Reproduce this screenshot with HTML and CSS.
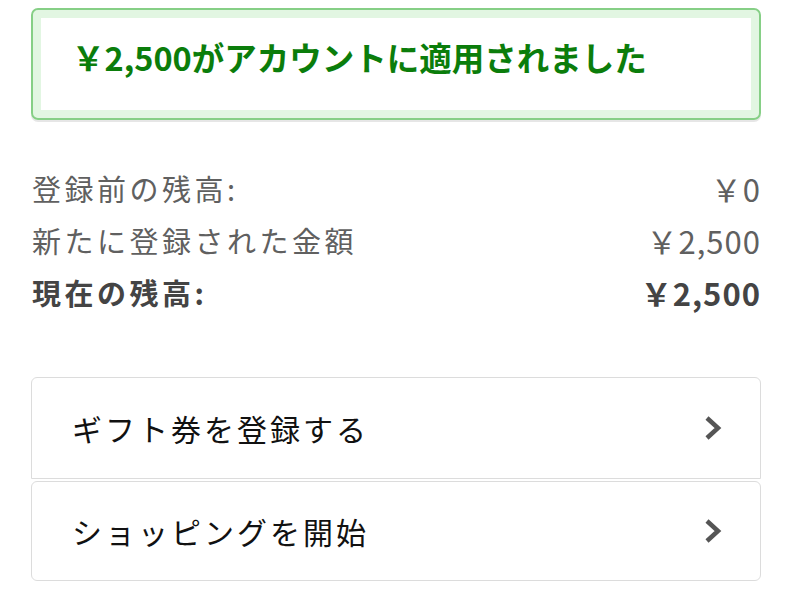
FILE: index.html
```html
<!DOCTYPE html>
<html lang="ja">
<head>
<meta charset="utf-8">
<title>ギフト券の登録</title>
<link rel="stylesheet" href="styles.css">
</head>
<body>
<main class="page">
  <div class="alert">
    <h4 class="alert-heading">￥2,500がアカウントに適用されました</h4>
  </div>

  <div class="balances">
    <div class="balance-row">
      <span class="balance-label">登録前の残高:</span>
      <span class="balance-amount">￥0</span>
    </div>
    <div class="balance-row">
      <span class="balance-label">新たに登録された金額</span>
      <span class="balance-amount">￥2,500</span>
    </div>
    <div class="balance-row balance-total">
      <span class="balance-label">現在の残高:</span>
      <span class="balance-amount">￥2,500</span>
    </div>
  </div>

  <nav class="action-list">
    <a class="action first" href="#">
      <span class="action-text">ギフト券を登録する</span>
      <svg class="chevron" viewBox="0 0 18 26" width="18" height="26" aria-hidden="true">
        <path d="M3 3 L14 13 L3 23" fill="none" stroke="#555" stroke-width="4.5" stroke-linejoin="miter"/>
      </svg>
    </a>
    <a class="action" href="#">
      <span class="action-text">ショッピングを開始</span>
      <svg class="chevron" viewBox="0 0 18 26" width="18" height="26" aria-hidden="true">
        <path d="M3 3 L14 13 L3 23" fill="none" stroke="#555" stroke-width="4.5" stroke-linejoin="miter"/>
      </svg>
    </a>
  </nav>
</main>
</body>
</html>
```

FILE: styles.css
```css
* {
  box-sizing: border-box;
}

html,
body {
  margin: 0;
  padding: 0;
  background: #ffffff;
}

body {
  font-family: "Noto Sans CJK JP", "Noto Sans", sans-serif;
  color: #111;
}

.page {
  padding: 8px 31px 0 31px;
}

/* success alert */
.alert {
  height: 112px;
  border: 2px solid #86cf86;
  border-radius: 7px;
  box-shadow: inset 0 0 0 8px #e2f6e2, 0 2px 0 #e6e6e6;
  padding: 27px 42px 0 39px;
}

.alert-heading {
  margin: 0;
  font-size: 32.5px;
  line-height: 40px;
  font-weight: 700;
  color: #0b7d0b;
  letter-spacing: 0;
}

/* balance summary */
.balances {
  margin-top: 42px;
}

.balance-row {
  display: flex;
  justify-content: space-between;
  align-items: center;
  height: 52px;
  color: #606060;
}

.balance-label {
  font-size: 29px;
  letter-spacing: 3.5px;
  padding-left: 1px;
}

.balance-amount {
  font-size: 31px;
  letter-spacing: 1px;
}

.balance-total {
  color: #444;
  font-weight: 700;
}

/* navigation buttons */
.action-list {
  margin-top: 59px;
  display: flex;
  flex-direction: column;
  gap: 2px;
}

.action {
  display: flex;
  align-items: center;
  justify-content: space-between;
  height: 100px;
  padding: 0 38px 0 40px;
  border: 1px solid #dcdcdc;
  border-radius: 6px;
  text-decoration: none;
  color: #111;
}

.action.first {
  height: 102px;
  border-radius: 6px 6px 0 0;
}

.action-text {
  font-size: 30px;
  letter-spacing: 3px;
}

.chevron {
  display: block;
}
```
